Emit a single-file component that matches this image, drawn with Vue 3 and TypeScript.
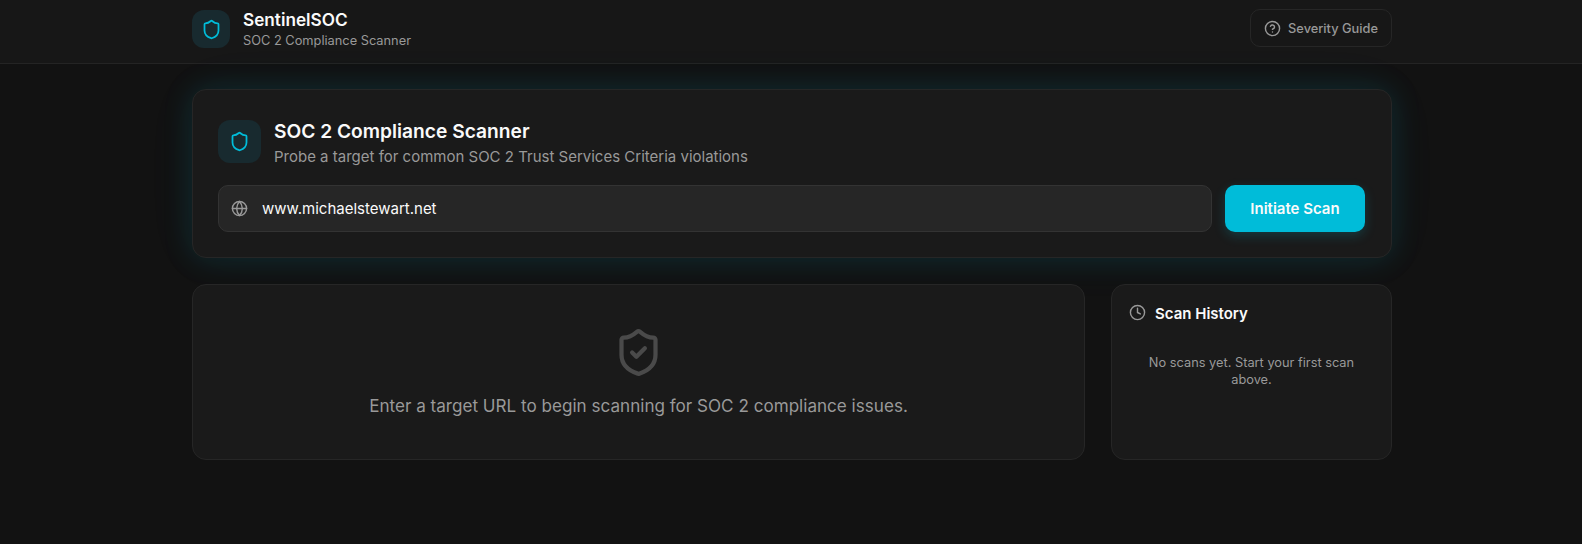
<script setup lang="ts">
const shieldPath =
  'M20 13c0 5-3.5 7.5-7.66 8.95a1 1 0 0 1-.67-.01C7.5 20.5 4 18 4 13V6a1 1 0 0 1 1-1c2 0 4.5-1.2 6.24-2.72a1.17 1.17 0 0 1 1.52 0C14.51 3.81 17 5 19 5a1 1 0 0 1 1 1z'
</script>

<template>
  <div class="page">
    <header class="topbar">
      <div class="topbar-inner">
        <div class="brand">
          <div class="icon-tile small">
            <svg width="21" height="21" viewBox="0 0 24 24" class="icon"><path :d="shieldPath" /></svg>
          </div>
          <div>
            <div class="brand-name">SentinelSOC</div>
            <div class="brand-sub">SOC 2 Compliance Scanner</div>
          </div>
        </div>
        <button class="guide-btn" type="button">
          <svg width="17" height="17" viewBox="0 0 24 24" class="icon">
            <circle cx="12" cy="12" r="10" />
            <path d="M9.09 9a3 3 0 0 1 5.83 1c0 2-3 3-3 3" />
            <path d="M12 17h.01" />
          </svg>
          Severity Guide
        </button>
      </div>
    </header>

    <main class="content">
      <section class="scan-card">
        <div class="scan-head">
          <div class="icon-tile">
            <svg width="21" height="21" viewBox="0 0 24 24" class="icon"><path :d="shieldPath" /></svg>
          </div>
          <div>
            <h1 class="scan-title">SOC 2 Compliance Scanner</h1>
            <p class="scan-sub">Probe a target for common SOC 2 Trust Services Criteria violations</p>
          </div>
        </div>
        <div class="scan-row">
          <div class="url-field">
            <svg width="17" height="17" viewBox="0 0 24 24" class="icon">
              <circle cx="12" cy="12" r="10" />
              <path d="M12 2a14.5 14.5 0 0 0 0 20 14.5 14.5 0 0 0 0-20" />
              <path d="M2 12h20" />
            </svg>
            <input class="url-input" type="text" value="www.michaelstewart.net" />
          </div>
          <button class="scan-btn" type="button">Initiate Scan</button>
        </div>
      </section>

      <div class="lower">
        <section class="panel empty">
          <svg width="51" height="51" viewBox="0 0 24 24" class="icon">
            <path :d="shieldPath" />
            <path d="m9 12 2 2 4-4" />
          </svg>
          <p class="empty-text">Enter a target URL to begin scanning for SOC 2 compliance issues.</p>
        </section>

        <aside class="panel history">
          <div class="history-head">
            <svg width="17" height="17" viewBox="0 0 24 24" class="icon clock">
              <circle cx="12" cy="12" r="10" />
              <path d="M12 6v6l4 2" />
            </svg>
            <h2 class="history-title">Scan History</h2>
          </div>
          <p class="history-empty">No scans yet. Start your first scan above.</p>
        </aside>
      </div>
    </main>
  </div>
</template>

<style>
html,
body {
  margin: 0;
  background: #121212;
}
</style>

<style scoped>
.page {
  min-height: 544px;
  background: #121212;
  color: #fafafa;
  font-family: Inter, "Noto Sans", sans-serif;
}

.icon {
  fill: none;
  stroke: currentColor;
  stroke-width: 2;
  stroke-linecap: round;
  stroke-linejoin: round;
  flex-shrink: 0;
}

.topbar {
  height: 63px;
  border-bottom: 1px solid #242424;
  background: #171717;
}

.topbar-inner {
  width: 1200px;
  margin-left: 192px;
  padding-top: 9px;
  display: flex;
  align-items: flex-start;
  justify-content: space-between;
}

.brand {
  display: flex;
  align-items: center;
  gap: 13px;
}

.icon-tile {
  width: 43px;
  height: 43px;
  border-radius: 12px;
  background: #182a2f;
  color: #00bcd9;
  display: flex;
  align-items: center;
  justify-content: center;
}

.icon-tile.small {
  width: 38px;
  height: 38px;
}

.brand-name {
  font-size: 17.2px;
  line-height: 22px;
  font-weight: 600;
}

.brand-sub {
  font-size: 12.8px;
  line-height: 17px;
  margin-top: 1px;
  color: #999;
}

.guide-btn {
  height: 38px;
  width: 142px;
  border: 1px solid #262626;
  border-radius: 10px;
  background: transparent;
  color: #999;
  font: inherit;
  font-size: 12.8px;
  font-weight: 500;
  display: flex;
  align-items: center;
  justify-content: center;
  gap: 7px;
  padding: 0;
}

.content {
  width: 1200px;
  margin-left: 192px;
  padding-top: 25px;
}

.scan-card {
  height: 169px;
  box-sizing: border-box;
  padding: 30px 26px 25px 25px;
  border: 1px solid #262626;
  border-radius: 14px;
  background: #1a1a1a;
  box-shadow: 0 0 30px rgba(0, 188, 217, 0.15), 0 0 60px rgba(0, 188, 217, 0.04);
}

.scan-head {
  display: flex;
  align-items: flex-start;
  gap: 13px;
}

.scan-title {
  margin: -1px 0 0;
  font-size: 19.2px;
  line-height: 24px;
  font-weight: 600;
}

.scan-sub {
  margin: 4px 0 0;
  font-size: 15px;
  line-height: 20px;
  color: #999;
}

.scan-row {
  display: flex;
  gap: 13px;
  margin-top: 18px;
}

.url-field {
  flex: 1;
  height: 47px;
  box-sizing: border-box;
  border: 1px solid #333;
  border-radius: 10px;
  background: #262626;
  color: #999;
  display: flex;
  align-items: center;
  gap: 14px;
  padding: 0 12px;
}

.url-input {
  flex: 1;
  border: 0;
  outline: none;
  background: transparent;
  color: #fafafa;
  font: inherit;
  font-size: 15px;
  padding: 0;
}

.scan-btn {
  width: 140px;
  height: 47px;
  border: 0;
  border-radius: 10px;
  background: #00bcd9;
  color: #fafafa;
  font: inherit;
  font-size: 15px;
  font-weight: 600;
  box-shadow: 0 4px 12px rgba(0, 188, 217, 0.2);
  padding: 0;
}

.lower {
  display: grid;
  grid-template-columns: 1fr 281px;
  gap: 26px;
  margin-top: 26px;
}

.panel {
  height: 176px;
  box-sizing: border-box;
  border: 1px solid #262626;
  border-radius: 14px;
  background: #1a1a1a;
}

.empty {
  display: flex;
  flex-direction: column;
  align-items: center;
  padding-top: 42px;
  color: #4a4a4a;
}

.empty-text {
  margin: 15px 0 0;
  font-size: 17.1px;
  line-height: 26px;
  color: #999;
}

.history {
  padding: 18px 18px 18px 17px;
}

.history-head {
  display: flex;
  align-items: center;
  gap: 9px;
  color: #999;
}

.clock {
  margin-top: -3px;
}

.history-title {
  margin: 0;
  font-size: 15px;
  line-height: 22px;
  font-weight: 600;
  color: #fafafa;
}

.history-empty {
  margin: 29px 10px 0 11px;
  font-size: 12.8px;
  line-height: 17px;
  text-align: center;
  color: #999;
}
</style>
